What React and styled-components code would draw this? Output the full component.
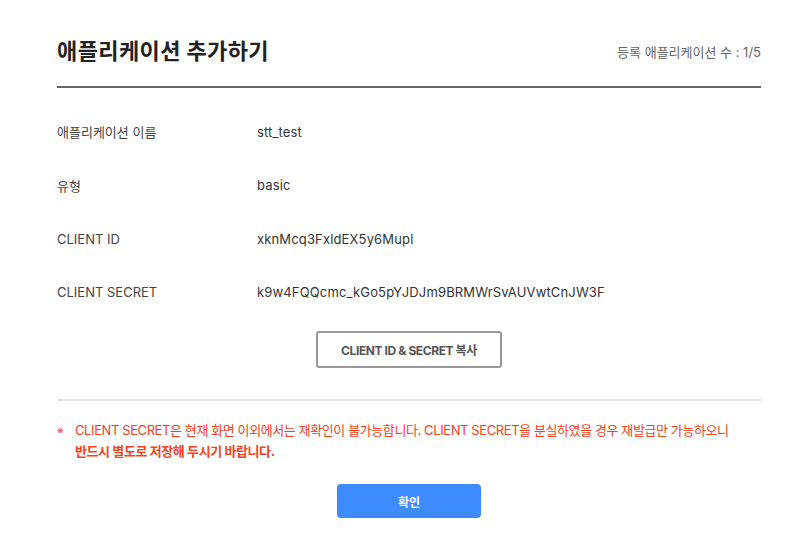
import React from "react";
import styled, { createGlobalStyle } from "styled-components";

const GlobalStyle = createGlobalStyle`
  body {
    margin: 0;
    background: #fff;
    font-family: Inter, "Noto Sans CJK KR", sans-serif;
  }
`;

const Page = styled.div`
  padding: 35px 50px 0 57px;
`;

const Header = styled.div`
  display: flex;
  align-items: center;
  justify-content: space-between;
  padding-bottom: 19px;
  border-bottom: 2px solid #666;
`;

const Title = styled.h2`
  margin: 0;
  font-size: 22px;
  line-height: 32px;
  font-weight: 700;
  color: #222;
  letter-spacing: 0.4px;
`;

const Count = styled.span`
  font-size: 13px;
  color: #666;
`;

const InfoList = styled.div`
  margin-top: 17px;
`;

const InfoRow = styled.div`
  display: flex;
  align-items: center;
  height: 53.5px;
  font-size: 13px;
`;

const InfoLabel = styled.div`
  width: 200px;
  color: #444;
`;

const InfoValue = styled.div`
  color: #333;
  letter-spacing: 0.15px;
`;

const Center = styled.div`
  display: flex;
  justify-content: center;
  margin-top: ${(p) => p.top}px;
`;

const CopyButton = styled.button`
  width: 186px;
  height: 37px;
  border: 2px solid #999;
  border-radius: 3px;
  background: #fff;
  color: #555;
  font-family: Inter, "Noto Sans CJK KR", sans-serif;
  font-size: 12px;
  font-weight: 700;
  letter-spacing: -0.4px;
  cursor: pointer;
`;

const Divider = styled.hr`
  margin: 31px 0 0;
  border: 0;
  border-top: 2px solid #e4e4e4;
`;

const Notice = styled.div`
  display: flex;
  margin-top: 19px;
  font-size: 13px;
  line-height: 21px;
  color: #f4431b;
  letter-spacing: -0.4px;
`;

const Mark = styled.span`
  width: 18px;
  flex-shrink: 0;
  font-size: 10px;
`;

const Strong = styled.strong`
  font-weight: 700;
`;

const ConfirmButton = styled.button`
  width: 144px;
  height: 34px;
  border: 0;
  border-radius: 4px;
  background: #3d8bff;
  color: #fff;
  font-family: Inter, "Noto Sans CJK KR", sans-serif;
  font-size: 12px;
  font-weight: 700;
  cursor: pointer;
`;

const rows = [
  ["애플리케이션 이름", "stt_test"],
  ["유형", "basic"],
  ["CLIENT ID", "xknMcq3FxldEX5y6Mupl"],
  ["CLIENT SECRET", "k9w4FQQcmc_kGo5pYJDJm9BRMWrSvAUVwtCnJW3F"],
];

export default function App() {
  return (
    <Page>
      <GlobalStyle />
      <Header>
        <Title>애플리케이션 추가하기</Title>
        <Count>등록 애플리케이션 수 : 1/5</Count>
      </Header>
      <InfoList>
        {rows.map(([label, value]) => (
          <InfoRow key={label}>
            <InfoLabel>{label}</InfoLabel>
            <InfoValue>{value}</InfoValue>
          </InfoRow>
        ))}
      </InfoList>
      <Center top={12}>
        <CopyButton>CLIENT ID &amp; SECRET 복사</CopyButton>
      </Center>
      <Divider />
      <Notice>
        <Mark>※</Mark>
        <div>
          CLIENT SECRET은 현재 화면 이외에서는 재확인이 불가능합니다. CLIENT SECRET을 분실하였을 경우 재발급만 가능하오니
          <br />
          <Strong>반드시 별도로 저장해 두시기 바랍니다.</Strong>
        </div>
      </Notice>
      <Center top={22}>
        <ConfirmButton>확인</ConfirmButton>
      </Center>
    </Page>
  );
}
